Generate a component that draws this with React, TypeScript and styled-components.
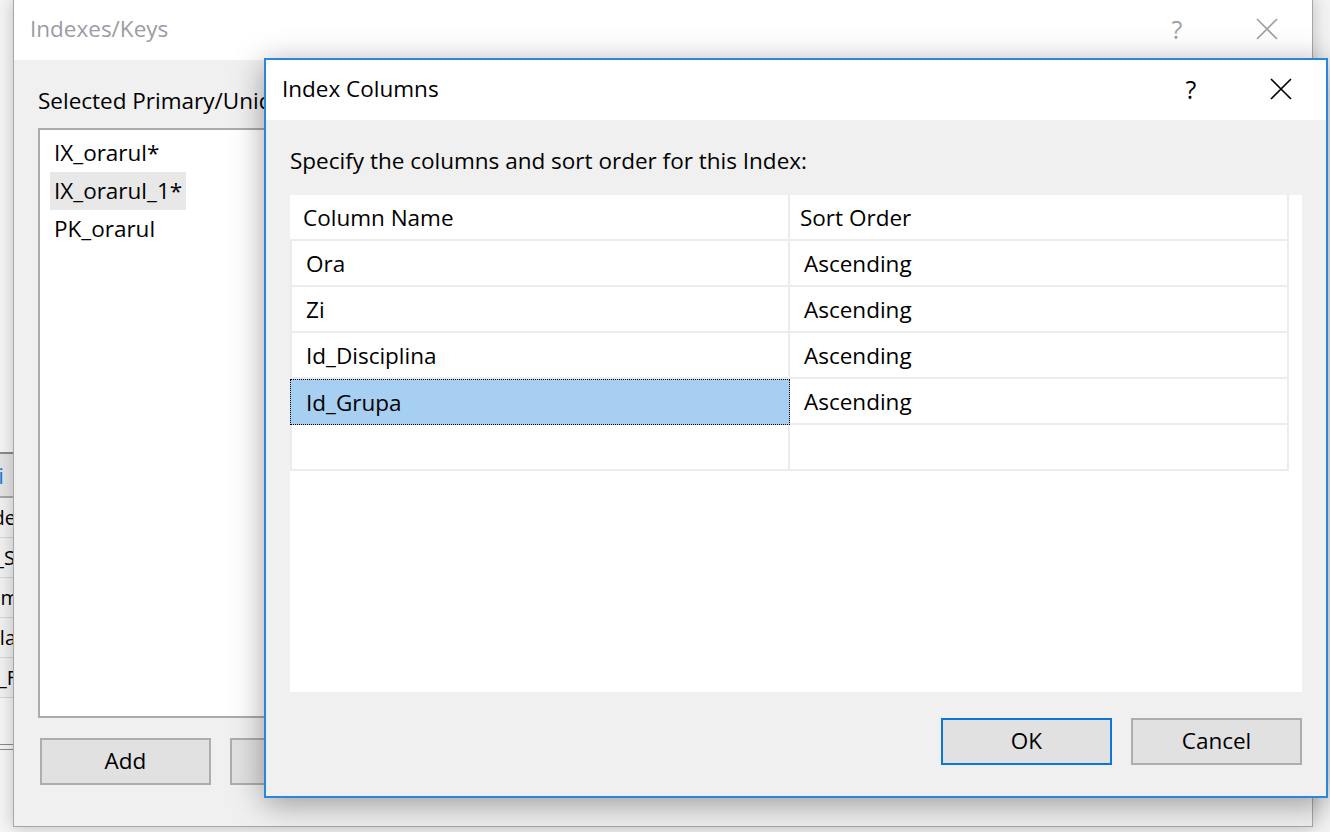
import React from "react";
import styled, { createGlobalStyle } from "styled-components";

const Global = createGlobalStyle`
  html, body { margin: 0; padding: 0; background: #f3f3f3; }
  body { font-family: "Open Sans", "Noto Sans", "DejaVu Sans", sans-serif; color: #000; }
  * { box-sizing: border-box; }
`;

const FONT = 22.5;

const Desktop = styled.div`
  position: relative;
  width: 1330px;
  height: 832px;
  overflow: hidden;
  background: #f3f3f3;
  font-size: ${FONT}px;
`;

/* ---------- window behind, on the far left ---------- */
const StripWindow = styled.div`
  position: absolute;
  left: 0;
  top: 0;
  width: 13px;
  height: 832px;
  overflow: hidden;
  background: #f5f5f5;
  padding-top: 452px;
  display: flex;
  flex-direction: column;
`;

const StripHeader = styled.div`
  height: 46px;
  border-top: 2px solid #8a8a8a;
  border-bottom: 2px solid #a8a8a8;
  background: #e4e4e4;
  display: flex;
  align-items: center;
  justify-content: flex-end;
  overflow: hidden;
  white-space: nowrap;
  color: #1a7fd4;
  padding-right: 9px;
`;

const StripRow = styled.div`
  height: 40px;
  border-bottom: 1px solid #d6d6d6;
  background: #f0f0f0;
  display: flex;
  align-items: center;
  justify-content: flex-end;
  overflow: hidden;
  white-space: nowrap;
  font-size: 20px;
`;

const StripText = styled.span<{ $shift: number }>`
  margin-right: -${(p) => p.$shift}px;
`;

const StripRule = styled.div`
  margin-top: 46px;
  height: 6px;
  border-top: 1px solid #8a8a8a;
  border-bottom: 1px solid #8a8a8a;
`;

/* ---------- dialog windows ---------- */
const Window = styled.div<{ $x: number; $y: number; $w: number; $h: number; $active?: boolean }>`
  position: absolute;
  left: ${(p) => p.$x}px;
  top: ${(p) => p.$y}px;
  width: ${(p) => p.$w}px;
  height: ${(p) => p.$h}px;
  display: flex;
  flex-direction: column;
  background: #f0f0f0;
  border: ${(p) => (p.$active ? "2px solid #2a88d8" : "1px solid #a6a6a6")};
  box-shadow: ${(p) =>
    p.$active ? "0 6px 30px rgba(0,0,0,0.36)" : "0 0 16px rgba(0,0,0,0.22)"};
  overflow: hidden;
`;

const TitleBar = styled.div`
  height: 60px;
  flex: none;
  background: #fff;
  display: flex;
  align-items: center;
  padding: 0 0 3px 16px;
`;

const Title = styled.div<{ $inactive?: boolean }>`
  flex: 1;
  white-space: nowrap;
  color: ${(p) => (p.$inactive ? "#9c9ca4" : "#000")};
`;

const CaptionButton = styled.div<{ $inactive?: boolean }>`
  width: 90px;
  height: 100%;
  display: flex;
  align-items: center;
  justify-content: center;
  color: ${(p) => (p.$inactive ? "#a0a0a0" : "#000")};
  font-size: 25px;
`;

const CloseGlyph = ({ color }: { color: string }) => (
  <svg width="22" height="22" viewBox="0 0 22 22">
    <path d="M1 1 L21 21 M21 1 L1 21" stroke={color} strokeWidth="1.7" fill="none" />
  </svg>
);

/* ---------- background dialog contents ---------- */
const BgBody = styled.div`
  flex: 1;
  padding: 23px 0 0 24px;
  display: flex;
  flex-direction: column;
`;

const Label = styled.div`
  line-height: 36px;
  white-space: nowrap;
`;

const ListBox = styled.div`
  margin-top: 9px;
  width: 600px;
  height: 590px;
  background: #fff;
  border: 2px solid #ababab;
  padding: 4px 0 0 10px;
  display: flex;
  flex-direction: column;
  align-items: flex-start;
`;

const ListItem = styled.div<{ $hl?: boolean }>`
  height: 38px;
  line-height: 38px;
  padding: 0 4px;
  background: ${(p) => (p.$hl ? "#e8e8e8" : "transparent")};
  white-space: nowrap;
`;

const ButtonRow = styled.div<{ $end?: boolean }>`
  display: flex;
  gap: 19px;
  justify-content: ${(p) => (p.$end ? "flex-end" : "flex-start")};
`;

const Button = styled.div<{ $primary?: boolean }>`
  width: 171px;
  height: 47px;
  flex: none;
  display: flex;
  align-items: center;
  justify-content: center;
  padding-bottom: 2px;
  background: #e1e1e1;
  border: 2px solid ${(p) => (p.$primary ? "#0a78d6" : "#adadad")};
`;

const BgButtons = styled(ButtonRow)`
  margin: 20px 0 0 2px;
`;

/* ---------- foreground dialog contents ---------- */
const FgBody = styled.div`
  flex: 1;
  display: flex;
  flex-direction: column;
  padding: 23px 24px 31px 24px;
`;

const Grid = styled.div`
  margin-top: 16px;
  flex: 1;
  background: #fff;
  display: flex;
  flex-direction: column;
`;

const GridRow = styled.div`
  display: flex;
  height: 46px;
`;

const Cell = styled.div<{ $w: number; $pad: number; $first?: boolean; $header?: boolean; $selected?: boolean }>`
  width: ${(p) => p.$w}px;
  height: 100%;
  display: flex;
  align-items: center;
  white-space: nowrap;
  padding-left: ${(p) => p.$pad}px;
  border-right: 2px solid #ececec;
  border-bottom: 2px solid #ececec;
  border-left: ${(p) => (p.$first && !p.$header ? "2px solid #ececec" : "none")};
  ${(p) =>
    p.$selected &&
    `
    background: #a6cff1;
    border: 1px dotted #000;
  `}
`;

type Row = { name: string; order: string; selected?: boolean };
const rows: Row[] = [
  { name: "Ora", order: "Ascending" },
  { name: "Zi", order: "Ascending" },
  { name: "Id_Disciplina", order: "Ascending" },
  { name: "Id_Grupa", order: "Ascending", selected: true },
  { name: "", order: "" },
];

const FgButtons = styled(ButtonRow)`
  margin-top: 26px;
`;

export default function App() {
  return (
    <>
      <Global />
      <Desktop>
        <StripWindow>
          <StripHeader>i</StripHeader>
          <StripRow><StripText $shift={3}>Code</StripText></StripRow>
          <StripRow><StripText $shift={2}>Id_S</StripText></StripRow>
          <StripRow><StripText $shift={6}>Num</StripText></StripRow>
          <StripRow><StripText $shift={3}>Sala</StripText></StripRow>
          <StripRow><StripText $shift={4}>Id_F</StripText></StripRow>
          <StripRule />
        </StripWindow>

        <Window $x={13} $y={-1} $w={1300} $h={828}>
          <TitleBar>
            <Title $inactive>Indexes/Keys</Title>
            <CaptionButton $inactive>?</CaptionButton>
            <CaptionButton $inactive>
              <CloseGlyph color="#a0a0a0" />
            </CaptionButton>
          </TitleBar>
          <BgBody>
            <Label>Selected Primary/Unique Key or Index:</Label>
            <ListBox>
              <ListItem>IX_orarul*</ListItem>
              <ListItem $hl>IX_orarul_1*</ListItem>
              <ListItem>PK_orarul</ListItem>
            </ListBox>
            <BgButtons>
              <Button>Add</Button>
              <Button>Delete</Button>
            </BgButtons>
          </BgBody>
        </Window>

        <Window $x={264} $y={58} $w={1064} $h={740} $active>
          <TitleBar>
            <Title>Index Columns</Title>
            <CaptionButton>?</CaptionButton>
            <CaptionButton>
              <CloseGlyph color="#000" />
            </CaptionButton>
          </TitleBar>
          <FgBody>
            <Label>Specify the columns and sort order for this Index:</Label>
            <Grid>
              <GridRow>
                <Cell $w={500} $pad={13} $first $header>
                  Column Name
                </Cell>
                <Cell $w={499} $pad={10} $header>
                  Sort Order
                </Cell>
              </GridRow>
              {rows.map((r, i) => (
                <GridRow key={i}>
                  <Cell $w={500} $pad={r.selected ? 15 : 14} $first $selected={r.selected}>
                    {r.name}
                  </Cell>
                  <Cell $w={499} $pad={14}>
                    {r.order}
                  </Cell>
                </GridRow>
              ))}
            </Grid>
            <FgButtons $end>
              <Button $primary>OK</Button>
              <Button>Cancel</Button>
            </FgButtons>
          </FgBody>
        </Window>
      </Desktop>
    </>
  );
}
